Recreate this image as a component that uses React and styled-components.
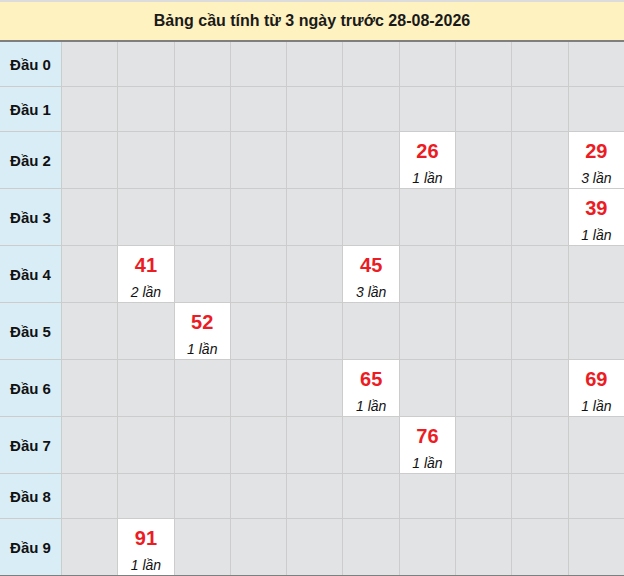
import React from "react";
import styled, { createGlobalStyle } from "styled-components";

const Global = createGlobalStyle`
  html, body { margin: 0; padding: 0; background: #ffffff; }
  body { font-family: "Liberation Sans", Arial, sans-serif; color: #000; }
`;

const Page = styled.div`
  width: 624px;
  display: flex;
  flex-direction: column;
`;

const Title = styled.div`
  height: 38px;
  border-top: 2px solid #dcdcdc;
  border-bottom: 2px solid #7f7f7f;
  background: #fff2c1;
  display: flex;
  align-items: center;
  justify-content: center;
  font-size: 16px;
  font-weight: bold;
  color: #1a1a1a;
`;

const Grid = styled.div`
  display: grid;
  grid-template-columns: 61px repeat(10, 1fr);
  column-gap: 1px;
  row-gap: 1px;
  background: #cccccc;
  border-bottom: 2px solid #7f7f7f;
`;

const Label = styled.div`
  background: #d9edf7;
  min-height: 44px;
  display: flex;
  align-items: center;
  justify-content: center;
  font-size: 15px;
  font-weight: bold;
  color: #111;
`;

const Cell = styled.div`
  background: ${(p) => (p.$filled ? "#ffffff" : "#e2e3e5")};
  min-height: 44px;
  display: flex;
  flex-direction: column;
  align-items: center;
  box-sizing: border-box;
  padding-top: ${(p) => (p.$filled ? "7px" : "0")};
  ${(p) => (p.$tall ? "height: 56px;" : "")}
`;

const Num = styled.div`
  font-size: 20px;
  line-height: 24px;
  font-weight: bold;
  color: #ec1c24;
`;

const Count = styled.div`
  margin-top: 5px;
  font-size: 14px;
  line-height: 20px;
  font-style: italic;
  color: #111;
`;

const data = {
  2: { 6: 1, 9: 3 },
  3: { 9: 1 },
  4: { 1: 2, 5: 3 },
  5: { 2: 1 },
  6: { 5: 1, 9: 1 },
  7: { 6: 1 },
  9: { 1: 1 },
};

export default function App() {
  const rows = Array.from({ length: 10 }, (_, i) => i);
  const cols = Array.from({ length: 10 }, (_, i) => i);
  return (
    <Page>
      <Global />
      <Title>Bảng cầu tính từ 3 ngày trước 28-08-2026</Title>
      <Grid>
        {rows.map((r) => {
          const rowData = data[r] || {};
          const tall = Object.keys(rowData).length > 0;
          return (
            <React.Fragment key={r}>
              <Label>Đầu {r}</Label>
              {cols.map((c) => {
                const count = rowData[c];
                return (
                  <Cell key={c} $filled={!!count} $tall={tall}>
                    {count ? (
                      <>
                        <Num>{`${r}${c}`}</Num>
                        <Count>{count} lần</Count>
                      </>
                    ) : null}
                  </Cell>
                );
              })}
            </React.Fragment>
          );
        })}
      </Grid>
    </Page>
  );
}
